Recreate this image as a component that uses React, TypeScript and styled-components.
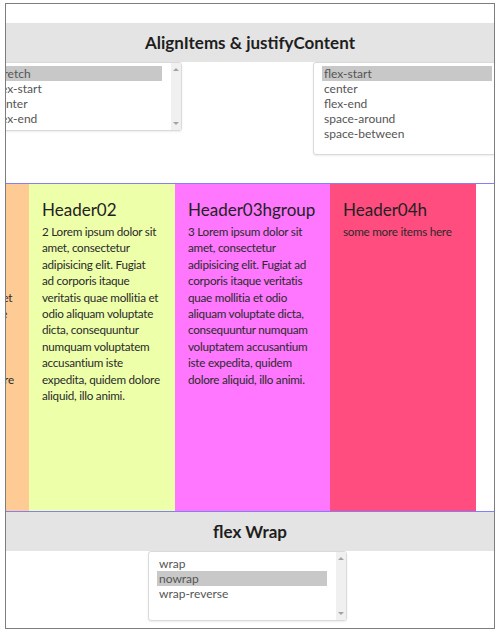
import React from "react";
import styled, { createGlobalStyle } from "styled-components";

const Global = createGlobalStyle`
  html, body { margin: 0; padding: 0; background: #ffffff; }
  body { font-family: "Lato", "Open Sans", sans-serif; }
`;

const Frame = styled.div`
  box-sizing: border-box;
  width: 490px;
  height: 626px;
  margin: 3px 0 0 5px;
  border: 1px solid #7d7d7d;
  overflow: hidden;
  padding-top: 19px;
`;

const Band = styled.h2`
  margin: 0;
  height: 39px;
  background: #e4e4e4;
  display: flex;
  align-items: center;
  justify-content: center;
  font-size: 17px;
  font-weight: 700;
  color: #1e1e1e;
`;

const SelectRow = styled.div`
  height: 121px;
  margin: 0 -18px 0 -23px;
  display: flex;
  justify-content: space-between;
  align-items: flex-start;
`;

const WrapRow = styled.div`
  display: flex;
  justify-content: flex-start;
  padding-left: 142px;
`;

const ListBox = styled.div<{ $h: number; $pad: number }>`
  box-sizing: border-box;
  width: 199px;
  height: ${(p) => p.$h}px;
  border: 1px solid #dadada;
  border-radius: 3px;
  box-shadow: 0 1px 2px rgba(0, 0, 0, 0.08);
  background: #fff;
  display: flex;
  padding-top: ${(p) => p.$pad}px;
  padding-left: 8px;
  flex-shrink: 0;
`;

const Options = styled.div`
  width: 170px;
  margin-right: 9px;
`;

const Option = styled.div<{ $sel?: boolean }>`
  height: 15px;
  line-height: 15px;
  padding-left: 2px;
  font-size: 12px;
  color: #555;
  white-space: nowrap;
  overflow: hidden;
  background: ${(p) => (p.$sel ? "#c8c8c8" : "transparent")};
`;

const Scrollbar = styled.div<{ $pad: number }>`
  width: 10px;
  align-self: stretch;
  margin-top: -${(p) => p.$pad}px;
  background: #f0f0f0;
  display: flex;
  flex-direction: column;
  justify-content: space-between;
  align-items: center;
  padding: 5px 0;
  box-sizing: border-box;
`;

const Arrow = styled.span<{ $down?: boolean }>`
  width: 0;
  height: 0;
  border-left: 3px solid transparent;
  border-right: 3px solid transparent;
  ${(p) =>
    p.$down
      ? "border-top: 3px solid #a3a3a3;"
      : "border-bottom: 3px solid #a3a3a3;"}
`;

const FlexBox = styled.div`
  height: 327px;
  border-top: 1px solid #7f7fff;
  border-bottom: 1px solid #7f7fff;
  display: flex;
  align-items: stretch;
  margin-left: -123px;
`;

const Column = styled.div<{ $bg: string; $w: number }>`
  box-sizing: border-box;
  flex: 0 0 ${(p) => p.$w}px;
  min-width: 0;
  overflow: hidden;
  background: ${(p) => p.$bg};
  padding: 15px 10px 0 13px;
`;

const Heading = styled.h3`
  margin: 0 0 2px;
  font-size: 17px;
  line-height: 22px;
  font-weight: 400;
  color: #222;
  white-space: nowrap;
`;

const Body = styled.p`
  margin: 0;
  font-size: 11.7px;
  letter-spacing: -0.25px;
  line-height: 16.4px;
  color: #2a2a2a;
  white-space: pre;
`;

const col1 = `1 Lorem ipsum dolor
amet, consectetur
adipisicing elit.
ad corporis itaque
veritatis quae mollitia et
odio aliquam voluptate
dicta, consequuntur
numquam voluptatem
accusantium iste
expedita, quidem dolore
aliquid, illo animi, illo`;

const col2 = `2 Lorem ipsum dolor sit
amet, consectetur
adipisicing elit. Fugiat
ad corporis itaque
veritatis quae mollitia et
odio aliquam voluptate
dicta, consequuntur
numquam voluptatem
accusantium iste
expedita, quidem dolore
aliquid, illo animi.`;

const col3 = `3 Lorem ipsum dolor sit
amet, consectetur
adipisicing elit. Fugiat ad
corporis itaque veritatis
quae mollitia et odio
aliquam voluptate dicta,
consequuntur numquam
voluptatem accusantium
iste expedita, quidem
dolore aliquid, illo animi.`;

type LBProps = { items: string[]; selected: number; h: number; pad: number };

const List = ({ items, selected, h, pad }: LBProps) => (
  <ListBox $h={h} $pad={pad}>
    <Options>
      {items.map((it, i) => (
        <Option key={it} $sel={i === selected}>
          {it}
        </Option>
      ))}
    </Options>
    <Scrollbar $pad={pad}>
      <Arrow />
      <Arrow $down />
    </Scrollbar>
  </ListBox>
);

export default function App() {
  return (
    <>
      <Global />
      <Frame>
        <Band>AlignItems &amp; justifyContent</Band>
        <SelectRow>
          <List
            items={["stretch", "flex-start", "center", "flex-end"]}
            selected={0}
            h={69}
            pad={3}
          />
          <List
            items={["flex-start", "center", "flex-end", "space-around", "space-between"]}
            selected={0}
            h={93}
            pad={3}
          />
        </SelectRow>
        <FlexBox>
          <Column $bg="#fecb95" $w={146}>
            <Heading>Header01</Heading>
            <Body>{col1}</Body>
          </Column>
          <Column $bg="#eeffaa" $w={146}>
            <Heading>Header02</Heading>
            <Body>{col2}</Body>
          </Column>
          <Column $bg="#ff77ff" $w={155}>
            <Heading>Header03hgroup</Heading>
            <Body>{col3}</Body>
          </Column>
          <Column $bg="#ff4d80" $w={146}>
            <Heading>Header04h</Heading>
            <Body>some more items here</Body>
          </Column>
        </FlexBox>
        <Band>flex Wrap</Band>
        <WrapRow>
          <List items={["wrap", "nowrap", "wrap-reverse"]} selected={1} h={70} pad={4} />
        </WrapRow>
      </Frame>
    </>
  );
}
